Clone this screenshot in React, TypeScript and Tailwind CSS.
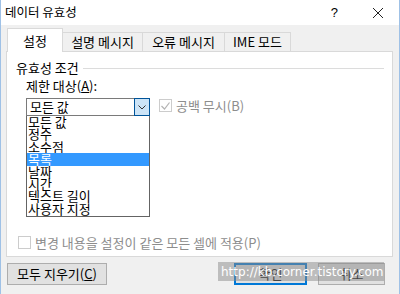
import React from "react";

const font = { fontFamily: '"Noto Sans CJK KR", "Noto Sans", sans-serif' };

export default function App() {
  const items = ["모든 값", "정수", "소수점", "목록", "날짜", "시간", "텍스트 길이", "사용자 지정"];
  return (
    <div className="relative w-[400px] h-[294px] overflow-hidden bg-[#f0f0f0] border-x border-[#9fc1e6] text-[12px] text-black" style={font}>
      {/* title bar */}
      <div className="h-[25px] bg-white flex items-center pl-[4px]">
        <span className="text-[12.5px] leading-none">데이터 유효성</span>
        <span className="ml-auto mr-[34px] text-[13px] leading-none" style={{ fontFamily: '"Liberation Sans", sans-serif' }}>?</span>
        <svg width="12" height="12" viewBox="0 0 12 12" className="mr-[15px]">
          <path d="M1 1 L11 11 M11 1 L1 11" stroke="#222" strokeWidth="1" />
        </svg>
      </div>
      {/* tabs */}
      <div className="flex items-end h-[26px] pl-[6px] pr-[6px]">
        <div className="relative z-10 h-[24px] w-[56px] bg-white border border-b-0 border-[#d9d9d9] flex items-center justify-center text-[13px] -mb-px">
          설정
        </div>
        <div className="h-[19px] w-[80px] border border-l-0 border-b-0 border-[#d9d9d9] bg-[#f0f0f0] flex items-center justify-center text-[13px]">설명 메시지</div>
        <div className="h-[19px] w-[82px] border border-l-0 border-b-0 border-[#d9d9d9] bg-[#f0f0f0] flex items-center justify-center text-[13px]">오류 메시지</div>
        <div className="h-[19px] w-[66px] border border-l-0 border-b-0 border-[#d9d9d9] bg-[#f0f0f0] flex items-center justify-center text-[13px]">IME 모드</div>
      </div>
      {/* panel */}
      <div className="mx-[5px] mr-[6px] h-[206px] bg-white border border-[#d9d9d9] relative">
        <div className="flex items-center pl-[9px] pr-[8px] mt-[7px] h-[16px]">
          <span className="text-[13px] leading-none">유효성 조건</span>
          <div className="flex-1 h-px bg-[#dcdcdc] ml-[4px] mt-[2px]" />
        </div>
        <div className="pl-[19px] mt-[3px] text-[13px] leading-[16px]">
          제한 대상(<span className="underline">A</span>):
        </div>
        <div className="flex items-start pl-[19px] mt-[4px]">
          <div className="flex flex-col">
            <div className="w-[124px] h-[18px] border border-[#7a7a7a] flex bg-white">
              <span className="flex-1 pl-[3px] text-[13px] leading-[16px]">모든 값</span>
              <div className="w-[16px] h-[18px] -mt-px -mr-px bg-[#cce4f7] border border-[#005499] flex items-center justify-center">
                <svg width="8" height="5" viewBox="0 0 8 5"><path d="M0.5 0.5 L4 4 L7.5 0.5" stroke="#333" fill="none" /></svg>
              </div>
            </div>
            <div className="w-[124px] h-[101px] border border-t-0 border-[#646464] bg-white flex flex-col pt-[0px]">
              {items.map((it, i) => (
                <div key={i} className={"h-[12.4px] leading-[12px] text-[13px] pl-[1px] overflow-visible whitespace-nowrap " + (i === 3 ? "bg-[#3399ff] text-white" : "")}>
                  {it}
                </div>
              ))}
            </div>
          </div>
          <div className="flex items-center ml-[9px] mt-[1px] text-[#8d8d8d]">
            <div className="w-[13px] h-[13px] border border-[#cccccc] bg-white flex items-center justify-center">
              <svg width="9" height="8" viewBox="0 0 9 8"><path d="M0.5 4 L3.5 7 L8.5 0.5" stroke="#b4b4b4" strokeWidth="1.2" fill="none" /></svg>
            </div>
            <span className="ml-[4px] text-[13px] leading-none">공백 무시(B)</span>
          </div>
        </div>
        <div className="flex items-center pl-[11px] mt-[19px] text-[#8d8d8d]">
          <div className="w-[13px] h-[13px] border border-[#cccccc] bg-white" />
          <span className="ml-[4px] text-[13px] leading-none">변경 내용을 설정이 같은 모든 셀에 적용(P)</span>
        </div>
      </div>
      {/* buttons */}
      <div className="flex items-center pl-[6px] pr-[14px] mt-[6px]">
        <div className="w-[100px] h-[22px] bg-[#e1e1e1] border border-[#adadad] flex items-center justify-center text-[13px]">
          모두 지우기(<span className="underline">C</span>)
        </div>
        <div className="ml-auto w-[73px] h-[22px] bg-[#e1e1e1] border-2 border-[#0078d7] flex items-center justify-center text-[13px]">확인</div>
        <div className="ml-[11px] w-[67px] h-[22px] bg-[#e1e1e1] border border-[#adadad] flex items-center justify-center text-[13px]">취소</div>
      </div>
      {/* watermark */}
      <div className="absolute left-[217px] top-[262px] w-[166px] h-[19px] bg-[#8a8a8a]/50 flex items-center pl-[3px] text-white text-[12px] leading-none" style={{ fontFamily: '"DejaVu Sans", sans-serif' }}>
        http://kb.corner.tistory.com
      </div>
    </div>
  );
}
